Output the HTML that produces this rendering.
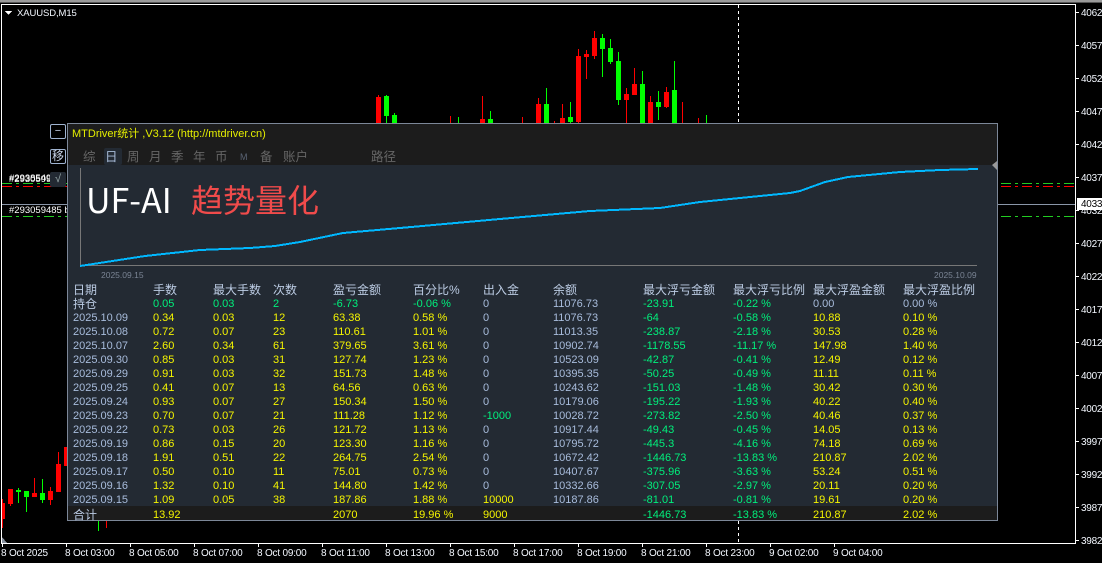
<!DOCTYPE html>
<html><head><meta charset="utf-8"><style>
html,body{margin:0;padding:0;background:#000}
body{width:1102px;height:563px;position:relative;overflow:hidden;font-family:"Liberation Sans","Noto Sans CJK SC",sans-serif}
.a{position:absolute;white-space:nowrap}
svg{position:absolute;left:0;top:0}
.s{font-size:10px;color:#f4f8ff;left:1081px;line-height:12px;letter-spacing:-.25px;margin-top:2px}
.t{font-size:10px;color:#f4f8ff;top:548px;line-height:12px;letter-spacing:-.2px}
#panel{position:absolute;left:67px;top:123px;width:929px;height:396px;border:1px solid #7c8798;background:#232a33}
#head{position:absolute;left:0;top:0;width:100%;height:41px;background:#1c1c1c}
.tab{position:absolute;top:25px;font-size:12.5px;line-height:16px;color:#666}
table{position:absolute;left:5px;top:159px;border-collapse:collapse;table-layout:fixed;width:905px;font-size:11px}
td{padding:0;height:14px;line-height:14px;white-space:nowrap;overflow:hidden;color:#f4f400}
td:nth-child(1),td:nth-child(7),td:nth-child(8){color:#a8bcdc}
td:nth-child(9),td:nth-child(10){color:#00f07c}
tr.h td{color:#bccce4;font-size:12px}
tr.c td{color:#00f07c}
tr.c td:nth-child(1){color:#bccce4;font-size:12px}
tr.c td:nth-child(7),tr.c td:nth-child(8),tr.c td.b{color:#a8bcdc}
td.g{color:#00f07c!important}
td.y{color:#f4f400!important}
tr.f td{position:relative;top:1px}
tr.f td:nth-child(1){color:#bccce4;font-size:12px}
</style></head><body>
<svg width="1102" height="563" viewBox="0 0 1102 563" shape-rendering="crispEdges">
<rect x="0" y="0" width="1102" height="2" fill="#9a9a9a"/>
<rect x="0" y="2" width="1102" height="1" fill="#555"/>
<rect x="1" y="4" width="1075" height="1" fill="#fff"/>
<rect x="1" y="4" width="1" height="540" fill="#fff"/>
<rect x="1075" y="4" width="1" height="540" fill="#fff"/>
<rect x="1" y="543" width="1075" height="1" fill="#fff"/>
<path d="M2 537L7 543H2Z" fill="#8a93a0"/>
<path d="M5 11H12L8.500 15Z" fill="#fff"/>
<line x1="738.500" y1="5" x2="738.500" y2="543" stroke="#fff" stroke-dasharray="3 3"/>
<g fill="#ff0000">
<rect x="378" y="95" width="1" height="29"/><rect x="376" y="97" width="5" height="27"/>
<rect x="450" y="116" width="1" height="8"/><rect x="482" y="96" width="1" height="28"/><rect x="480" y="119" width="5" height="5"/>
<rect x="522" y="117" width="1" height="7"/><rect x="538" y="98" width="1" height="26"/><rect x="536" y="104" width="5" height="20"/>
<rect x="554" y="121" width="1" height="3"/><rect x="562" y="104" width="1" height="20"/><rect x="560" y="118" width="5" height="6"/>
<rect x="578" y="49" width="1" height="75"/><rect x="576" y="56" width="5" height="66"/>
<rect x="586" y="50" width="1" height="29"/><rect x="584" y="54" width="5" height="3"/>
<rect x="594" y="31" width="1" height="28"/><rect x="592" y="38" width="5" height="18"/>
<rect x="626" y="88" width="1" height="36"/><rect x="624" y="94" width="5" height="6"/>
<rect x="634" y="68" width="1" height="27"/><rect x="632" y="84" width="5" height="11"/>
<rect x="650" y="96" width="1" height="28"/><rect x="648" y="102" width="5" height="22"/>
<rect x="666" y="87" width="1" height="21"/><rect x="664" y="92" width="5" height="15"/>
<rect x="682" y="102" width="1" height="22"/><rect x="698" y="118" width="1" height="6"/>
<rect x="2" y="499" width="1" height="29"/><rect x="2" y="503" width="3" height="16"/>
<rect x="8" y="489" width="5" height="15"/><rect x="10" y="489" width="1" height="17"/>
<rect x="34" y="478" width="1" height="19"/><rect x="32" y="493" width="5" height="4"/>
<rect x="50" y="487" width="1" height="18"/><rect x="48" y="491" width="5" height="9"/>
<rect x="58" y="452" width="1" height="12"/><rect x="56" y="464" width="5" height="28"/>
<rect x="64" y="447" width="3" height="19"/><rect x="106" y="521" width="1" height="7"/>
</g>
<g fill="#00ff00">
<rect x="386" y="95" width="1" height="29"/><rect x="384" y="96" width="5" height="20"/>
<rect x="394" y="113" width="1" height="11"/><rect x="392" y="115" width="5" height="9"/>
<rect x="458" y="117" width="1" height="7"/><rect x="490" y="111" width="1" height="13"/><rect x="488" y="119" width="5" height="5"/>
<rect x="546" y="88" width="1" height="36"/><rect x="544" y="104" width="5" height="20"/>
<rect x="570" y="102" width="1" height="22"/><rect x="568" y="117" width="5" height="5"/>
<rect x="602" y="34" width="1" height="43"/><rect x="600" y="38" width="5" height="11"/>
<rect x="610" y="39" width="1" height="25"/><rect x="608" y="48" width="5" height="14"/>
<rect x="618" y="52" width="1" height="53"/><rect x="616" y="61" width="5" height="39"/>
<rect x="642" y="71" width="1" height="53"/><rect x="640" y="84" width="5" height="40"/>
<rect x="658" y="91" width="1" height="29"/><rect x="656" y="102" width="5" height="5"/>
<rect x="674" y="61" width="1" height="63"/><rect x="672" y="90" width="5" height="34"/>
<rect x="706" y="115" width="1" height="9"/>
<rect x="18" y="488" width="1" height="15"/><rect x="16" y="490" width="5" height="2"/>
<rect x="26" y="491" width="1" height="21"/><rect x="24" y="491" width="5" height="6"/>
<rect x="42" y="479" width="1" height="24"/><rect x="40" y="493" width="5" height="7"/>
<rect x="98" y="521" width="1" height="10"/>
</g>
<line x1="2" y1="183.500" x2="67" y2="183.500" stroke="#22cc22" stroke-dasharray="10 4 3 4"/>
<line x1="2" y1="186.500" x2="67" y2="186.500" stroke="#ff0000" stroke-dasharray="10 4 3 4"/>
<line x1="2" y1="216.500" x2="67" y2="216.500" stroke="#22cc22" stroke-dasharray="10 4 3 4"/>
<line x1="1001" y1="183.500" x2="1075" y2="183.500" stroke="#22cc22" stroke-dasharray="10 4 3 4"/>
<line x1="1001" y1="186.500" x2="1075" y2="186.500" stroke="#ff0000" stroke-dasharray="10 4 3 4"/>
<line x1="1001" y1="216.500" x2="1075" y2="216.500" stroke="#22cc22" stroke-dasharray="10 4 3 4"/>
<rect x="2" y="204" width="65" height="1" fill="#8a96a8"/>
<rect x="998" y="204" width="77" height="1" fill="#8a96a8"/>
<g fill="#fff">
<rect x="1076" y="12" width="3" height="1"/><rect x="1076" y="45" width="3" height="1"/><rect x="1076" y="78" width="3" height="1"/><rect x="1076" y="111" width="3" height="1"/><rect x="1076" y="144" width="3" height="1"/><rect x="1076" y="177" width="3" height="1"/><rect x="1076" y="210" width="3" height="1"/><rect x="1076" y="243" width="3" height="1"/><rect x="1076" y="276" width="3" height="1"/><rect x="1076" y="309" width="3" height="1"/><rect x="1076" y="342" width="3" height="1"/><rect x="1076" y="375" width="3" height="1"/><rect x="1076" y="408" width="3" height="1"/><rect x="1076" y="441" width="3" height="1"/><rect x="1076" y="474" width="3" height="1"/><rect x="1076" y="507" width="3" height="1"/><rect x="1076" y="540" width="3" height="1"/>
<rect x="2" y="544" width="1" height="3"/><rect x="66" y="544" width="1" height="3"/><rect x="130" y="544" width="1" height="3"/><rect x="194" y="544" width="1" height="3"/><rect x="258" y="544" width="1" height="3"/><rect x="322" y="544" width="1" height="3"/><rect x="386" y="544" width="1" height="3"/><rect x="450" y="544" width="1" height="3"/><rect x="514" y="544" width="1" height="3"/><rect x="578" y="544" width="1" height="3"/><rect x="642" y="544" width="1" height="3"/><rect x="706" y="544" width="1" height="3"/><rect x="770" y="544" width="1" height="3"/><rect x="834" y="544" width="1" height="3"/>
</g>
</svg>
<div class="a" style="left:17px;top:8px;font-size:9.5px;line-height:12px;color:#f4f8ff;letter-spacing:-.1px">XAUUSD,M15</div>
<div class="a s" style="top:6px">4062</div><div class="a s" style="top:39px">4057</div><div class="a s" style="top:72px">4052</div><div class="a s" style="top:105px">4047</div><div class="a s" style="top:138px">4042</div><div class="a s" style="top:171px">4037</div><div class="a s" style="top:204px">4032</div><div class="a s" style="top:237px">4027</div><div class="a s" style="top:270px">4022</div><div class="a s" style="top:303px">4017</div><div class="a s" style="top:336px">4012</div><div class="a s" style="top:369px">4007</div><div class="a s" style="top:402px">4002</div><div class="a s" style="top:435px">3997</div><div class="a s" style="top:468px">3992</div><div class="a s" style="top:501px">3987</div><div class="a s" style="top:534px">3982</div>
<div class="a" style="left:1077px;top:198px;width:25px;height:12px;background:#fff;color:#000;font-size:10px;line-height:13px;text-indent:4px;letter-spacing:-.25px;overflow:hidden">4033</div>
<div class="a t" style="left:1px">8 Oct 2025</div><div class="a t" style="left:65px">8 Oct 03:00</div><div class="a t" style="left:129px">8 Oct 05:00</div><div class="a t" style="left:193px">8 Oct 07:00</div><div class="a t" style="left:257px">8 Oct 09:00</div><div class="a t" style="left:321px">8 Oct 11:00</div><div class="a t" style="left:385px">8 Oct 13:00</div><div class="a t" style="left:449px">8 Oct 15:00</div><div class="a t" style="left:513px">8 Oct 17:00</div><div class="a t" style="left:577px">8 Oct 19:00</div><div class="a t" style="left:641px">8 Oct 21:00</div><div class="a t" style="left:705px">8 Oct 23:00</div><div class="a t" style="left:769px">9 Oct 02:00</div><div class="a t" style="left:833px">9 Oct 04:00</div>
<div class="a" style="left:9px;top:172px;font-size:9.500px;line-height:14px;color:#fff">#2938549</div>
<div class="a" style="left:9px;top:173px;font-size:9.500px;line-height:14px;color:#fff">#2930599</div>
<div class="a" style="left:9px;top:204px;font-size:9.500px;line-height:14px;color:#fff">#293059485 b</div>
<div class="a" style="left:50px;top:172px;width:16px;height:15px;background:#232a33;color:#9aa;font-size:11px;line-height:15px;text-align:center;border-radius:2px">√</div>
<div class="a" style="left:50px;top:124px;width:14px;height:13px;border:1px solid #9fb3d0;border-radius:2px;color:#c8d4e8;font-size:11px;line-height:12px;text-align:center">−</div>
<div class="a" style="left:50px;top:149px;width:14px;height:13px;border:1px solid #9fb3d0;border-radius:2px;color:#c8d4e8;font-size:12px;line-height:13px;text-align:center">移</div>
<div id="panel">
<div id="head"></div>
<div class="a" style="left:4px;top:3px;font-size:11px;line-height:15px;color:#e4ee00">MTDriver统计 ,V3.12 (http://mtdriver.cn)</div>
<div class="a" style="left:36px;top:24px;width:18px;height:17px;background:#232a33;border-radius:2px"></div>
<span class="tab" style="left:15px">综</span><span class="tab" style="left:37px;color:#a8bcd8">日</span><span class="tab" style="left:59px">周</span><span class="tab" style="left:81px">月</span><span class="tab" style="left:103px">季</span><span class="tab" style="left:125px">年</span><span class="tab" style="left:147px">币</span><span class="tab" style="left:172px;font-size:9px;color:#5a6474">M</span><span class="tab" style="left:192px">备</span><span class="tab" style="left:215px">账户</span><span class="tab" style="left:303px">路径</span>
<svg width="929" height="396" viewBox="68 124 929 396" style="left:0;top:0">
<rect x="80" y="168" width="1" height="98" fill="#777" shape-rendering="crispEdges"/>
<rect x="80" y="265" width="897" height="1" fill="#777" shape-rendering="crispEdges"/>
<polyline fill="none" stroke="#00b8ff" stroke-width="2" shape-rendering="crispEdges" points="80,266 145,256 200,250 250,248 275,246 300,242 343,233 400,228 500,219 590,211 660,208 700,202 790,193 800,191 825,182 848,177 900,172 940,170 978,169"/>
<path d="M997 161L992 165L997 170Z" fill="#999"/>
</svg>
<div class="a" style="left:33px;top:145px;font-size:8.500px;line-height:12px;color:#7a8494">2025.09.15</div>
<div class="a" style="left:866px;top:145px;font-size:8.500px;line-height:12px;color:#7a8494">2025.10.09</div>
<div class="a" style="left:18px;top:53px;font-size:34px;line-height:44px;color:#fff;font-family:'Noto Sans CJK SC','Liberation Sans',sans-serif">UF-AI</div>
<div class="a" style="left:123px;top:53px;font-size:32px;line-height:44px;color:#f04b4b;font-family:'Noto Sans CJK SC',sans-serif">趋势量化</div>
<div class="a" style="left:0;top:382px;width:929px;height:14px;background:#1c1c1c"></div>
<table>
<colgroup><col style="width:80px"><col style="width:60px"><col style="width:60px"><col style="width:60px"><col style="width:80px"><col style="width:70px"><col style="width:70px"><col style="width:90px"><col style="width:90px"><col style="width:80px"><col style="width:90px"><col style="width:75px"></colgroup>
<tr class="h"><td>日期</td><td>手数</td><td>最大手数</td><td>次数</td><td>盈亏金额</td><td>百分比%</td><td>出入金</td><td>余额</td><td>最大浮亏金额</td><td>最大浮亏比例</td><td>最大浮盈金额</td><td>最大浮盈比例</td></tr>
<tr class="c"><td>持仓</td><td>0.05</td><td>0.03</td><td>2</td><td>-6.73</td><td>-0.06 %</td><td>0</td><td>11076.73</td><td>-23.91</td><td>-0.22 %</td><td class="b">0.00</td><td class="b">0.00 %</td></tr>
<tr><td>2025.10.09</td><td>0.34</td><td>0.03</td><td>12</td><td>63.38</td><td>0.58 %</td><td>0</td><td>11076.73</td><td>-64</td><td>-0.58 %</td><td>10.88</td><td>0.10 %</td></tr>
<tr><td>2025.10.08</td><td>0.72</td><td>0.07</td><td>23</td><td>110.61</td><td>1.01 %</td><td>0</td><td>11013.35</td><td>-238.87</td><td>-2.18 %</td><td>30.53</td><td>0.28 %</td></tr>
<tr><td>2025.10.07</td><td>2.60</td><td>0.34</td><td>61</td><td>379.65</td><td>3.61 %</td><td>0</td><td>10902.74</td><td>-1178.55</td><td>-11.17 %</td><td>147.98</td><td>1.40 %</td></tr>
<tr><td>2025.09.30</td><td>0.85</td><td>0.03</td><td>31</td><td>127.74</td><td>1.23 %</td><td>0</td><td>10523.09</td><td>-42.87</td><td>-0.41 %</td><td>12.49</td><td>0.12 %</td></tr>
<tr><td>2025.09.29</td><td>0.91</td><td>0.03</td><td>32</td><td>151.73</td><td>1.48 %</td><td>0</td><td>10395.35</td><td>-50.25</td><td>-0.49 %</td><td>11.11</td><td>0.11 %</td></tr>
<tr><td>2025.09.25</td><td>0.41</td><td>0.07</td><td>13</td><td>64.56</td><td>0.63 %</td><td>0</td><td>10243.62</td><td>-151.03</td><td>-1.48 %</td><td>30.42</td><td>0.30 %</td></tr>
<tr><td>2025.09.24</td><td>0.93</td><td>0.07</td><td>27</td><td>150.34</td><td>1.50 %</td><td>0</td><td>10179.06</td><td>-195.22</td><td>-1.93 %</td><td>40.22</td><td>0.40 %</td></tr>
<tr><td>2025.09.23</td><td>0.70</td><td>0.07</td><td>21</td><td>111.28</td><td>1.12 %</td><td class="g">-1000</td><td>10028.72</td><td>-273.82</td><td>-2.50 %</td><td>40.46</td><td>0.37 %</td></tr>
<tr><td>2025.09.22</td><td>0.73</td><td>0.03</td><td>26</td><td>121.72</td><td>1.13 %</td><td>0</td><td>10917.44</td><td>-49.43</td><td>-0.45 %</td><td>14.05</td><td>0.13 %</td></tr>
<tr><td>2025.09.19</td><td>0.86</td><td>0.15</td><td>20</td><td>123.30</td><td>1.16 %</td><td>0</td><td>10795.72</td><td>-445.3</td><td>-4.16 %</td><td>74.18</td><td>0.69 %</td></tr>
<tr><td>2025.09.18</td><td>1.91</td><td>0.51</td><td>22</td><td>264.75</td><td>2.54 %</td><td>0</td><td>10672.42</td><td>-1446.73</td><td>-13.83 %</td><td>210.87</td><td>2.02 %</td></tr>
<tr><td>2025.09.17</td><td>0.50</td><td>0.10</td><td>11</td><td>75.01</td><td>0.73 %</td><td>0</td><td>10407.67</td><td>-375.96</td><td>-3.63 %</td><td>53.24</td><td>0.51 %</td></tr>
<tr><td>2025.09.16</td><td>1.32</td><td>0.10</td><td>41</td><td>144.80</td><td>1.42 %</td><td>0</td><td>10332.66</td><td>-307.05</td><td>-2.97 %</td><td>20.11</td><td>0.20 %</td></tr>
<tr><td>2025.09.15</td><td>1.09</td><td>0.05</td><td>38</td><td>187.86</td><td>1.88 %</td><td class="y">10000</td><td>10187.86</td><td>-81.01</td><td>-0.81 %</td><td>19.61</td><td>0.20 %</td></tr>
<tr class="f"><td>合计</td><td>13.92</td><td></td><td></td><td>2070</td><td>19.96 %</td><td class="y">9000</td><td></td><td>-1446.73</td><td>-13.83 %</td><td>210.87</td><td>2.02 %</td></tr>
</table>
</div>
</body></html>
